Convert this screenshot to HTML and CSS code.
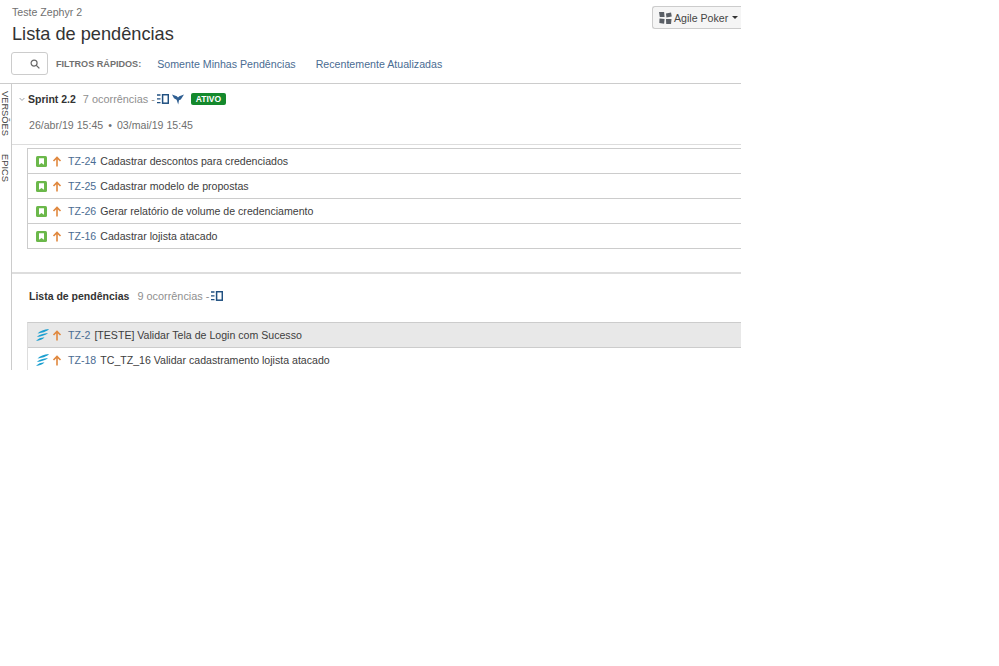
FILE: index.html
```html
<!DOCTYPE html>
<html lang="pt">
<head>
<meta charset="utf-8">
<title>Lista de pendências</title>
<link rel="stylesheet" href="styles.css">
</head>
<body>
<svg class="defs" width="0" height="0" aria-hidden="true">
  <symbol id="story" viewBox="0 0 11 11"><rect width="11" height="11" rx="1.5" fill="#6bb84a"/><path d="M3 2.2h5v6.6L5.5 6.9 3 8.8z" fill="#fff"/></symbol>
  <symbol id="up" viewBox="0 0 10 11"><path d="M5 10.5V1.5M1.5 5L5 1.5 8.5 5" fill="none" stroke="#e0883e" stroke-width="1.6"/></symbol>
  <symbol id="test" viewBox="0 0 13 12"><path d="M1.500 4.500C4 1.800 8 .6 13 0 11 2.500 6.500 3.700 1.500 4.500zM.8 8C3.500 5.300 7.500 4.500 12 4 10 6.300 5.500 7.300.8 8zM0 12C2 9.500 5 8.800 8.500 8.300 7 10.500 3.500 11.500 0 12z" fill="#1b9fd0"/></symbol>
  <symbol id="plan" viewBox="0 0 12 10"><path d="M0 1h3.500M0 4.800h3.500M0 8.600h3.500" stroke="#205081" stroke-width="1.300"/><rect x="5.600" y=".7" width="5.700" height="8.500" fill="none" stroke="#205081" stroke-width="1.500"/></symbol>
</svg>
<div class="board">
  <header class="top">
    <div class="headings">
      <div class="project">Teste Zephyr 2</div>
      <h1 class="title">Lista de pendências</h1>
    </div>
    <button class="poker">
      <svg class="poker-icon" viewBox="0 0 14 13" aria-hidden="true"><path d="M0 0h5.500l.5 5.500H.8zM7.500 1.500l5.500-1 .8 4.500-5.800 1zM.5 7l5.500.5-.5 5.200-5.200-.7zM7.500 7.500h6l-.5 5.500H7.800z" fill="#5a5f66"/></svg>
      <span class="poker-text">Agile Poker</span>
      <span class="caret"></span>
    </button>
  </header>
  <div class="filters">
    <div class="search">
      <svg class="search-icon" viewBox="0 0 11 11" aria-hidden="true"><circle cx="4.500" cy="4.500" r="3.300" fill="none" stroke="#666" stroke-width="1.300"/><path d="M7 7l3.300 3.300" stroke="#666" stroke-width="1.500"/></svg>
    </div>
    <span class="filters-label">FILTROS RÁPIDOS:</span>
    <a class="filter-link">Somente Minhas Pendências</a>
    <a class="filter-link">Recentemente Atualizadas</a>
  </div>
  <div class="body">
    <aside class="rail">
      <span class="rail-label">VERSÕES</span>
      <span class="rail-label">EPICS</span>
    </aside>
    <main class="content">
      <section class="sprint">
        <div class="sprint-head">
          <svg class="chev" viewBox="0 0 7 5" aria-hidden="true"><path d="M.7.8L3.500 3.600 6.300.8" fill="none" stroke="#8a8f96" stroke-width="1"/></svg>
          <strong class="name">Sprint 2.2</strong>
          <span class="count">7 ocorrências -</span>
          <svg class="plan" aria-hidden="true"><use href="#plan"/></svg>
          <svg class="fly" viewBox="0 0 12 11" aria-hidden="true"><path d="M0 .5l4.800 1.800L6 3.500 7.300 2.200 12 .5 8.800 5.500 7 6.300 6.200 10.500 4.600 5.700 2 4.300z" fill="#2f5f92"/></svg>
          <span class="badge">ATIVO</span>
        </div>
        <div class="dates">26/abr/19 15:45<span class="dot">•</span>03/mai/19 15:45</div>
        <div class="list">
          <div class="row"><svg class="type" aria-hidden="true"><use href="#story"/></svg><svg class="prio" aria-hidden="true"><use href="#up"/></svg><a class="key">TZ-24</a><span class="sum">Cadastrar descontos para credenciados</span></div>
          <div class="row"><svg class="type" aria-hidden="true"><use href="#story"/></svg><svg class="prio" aria-hidden="true"><use href="#up"/></svg><a class="key">TZ-25</a><span class="sum">Cadastrar modelo de propostas</span></div>
          <div class="row"><svg class="type" aria-hidden="true"><use href="#story"/></svg><svg class="prio" aria-hidden="true"><use href="#up"/></svg><a class="key">TZ-26</a><span class="sum">Gerar relatório de volume de credenciamento</span></div>
          <div class="row"><svg class="type" aria-hidden="true"><use href="#story"/></svg><svg class="prio" aria-hidden="true"><use href="#up"/></svg><a class="key">TZ-16</a><span class="sum">Cadastrar lojista atacado</span></div>
        </div>
      </section>
      <section class="backlog">
        <div class="backlog-head">
          <strong class="name">Lista de pendências</strong>
          <span class="count">9 ocorrências -</span>
          <svg class="plan" aria-hidden="true"><use href="#plan"/></svg>
        </div>
        <div class="list">
          <div class="row selected"><svg class="type wide" aria-hidden="true"><use href="#test"/></svg><svg class="prio" aria-hidden="true"><use href="#up"/></svg><a class="key">TZ-2</a><span class="sum">[TESTE] Validar Tela de Login com Sucesso</span></div>
          <div class="row"><svg class="type wide" aria-hidden="true"><use href="#test"/></svg><svg class="prio" aria-hidden="true"><use href="#up"/></svg><a class="key">TZ-18</a><span class="sum">TC_TZ_16 Validar cadastramento lojista atacado</span></div>
        </div>
      </section>
    </main>
  </div>
</div>
</body>
</html>
```

FILE: styles.css
```css
* { box-sizing: border-box; }
html, body { margin: 0; background: #fff; }
body { font-family: "Liberation Sans", Arial, sans-serif; color: #333; }
.defs { position: absolute; }
.board { width: 741px; height: 370px; overflow: hidden; display: flex; flex-direction: column; }
.top { display: flex; justify-content: space-between; align-items: flex-start; height: 47px; padding: 6px 0 0 12px; }
.project { font-size: 10.6px; line-height: 13px; color: #707070; }
.title { margin: 4px 0 0; font-size: 18.2px; line-height: 22px; font-weight: 400; color: #333; }
.poker { width: 89px; height: 23px; margin: 0; padding: 0 0 0 6px; display: flex; align-items: center; background: #f5f5f5; border: 1px solid #ccc; border-right: 0; border-radius: 3px 0 0 3px; font: 10.6px "Liberation Sans", Arial, sans-serif; color: #444; white-space: nowrap; }
.poker-icon { width: 13px; height: 12px; margin-right: 2px; }
.caret { width: 0; height: 0; margin-left: 4px; border: 3px solid transparent; border-top: 3px solid #333; border-bottom: 0; }
.filters { display: flex; align-items: center; height: 37px; padding: 5px 0 8px 11px; border-bottom: 1px solid #ccc; }
.search { width: 37px; height: 23px; margin-right: 8px; display: flex; align-items: center; justify-content: flex-end; padding-right: 7px; border: 1px solid #ccc; border-radius: 3px; }
.search-icon { width: 10px; height: 10px; }
.filters-label { font-size: 9.1px; font-weight: 700; color: #707070; margin-right: 16px; }
.filter-link { font-size: 10.65px; color: #4a6c92; margin-right: 20px; }
.body { flex: 1; display: flex; min-height: 0; }
.rail { width: 12px; flex: none; border-right: 1px solid #ccc; display: flex; flex-direction: column; align-items: center; gap: 18px; padding: 7px 2px 0 0; }
.rail-label { writing-mode: vertical-rl; font-size: 9.3px; line-height: 10px; color: #444; }
.content { flex: 1; min-width: 0; }
.sprint { height: 190px; padding-top: 8px; border-bottom: 2px solid #ddd; }
.sprint-head { display: flex; align-items: center; height: 14px; padding-left: 7px; }
.chev { width: 6px; height: 5px; margin-right: 3px; }
.name { font-size: 10.5px; font-weight: 700; color: #333; margin-right: 7px; }
.count { font-size: 10.9px; color: #8f8f8f; margin-right: 2px; }
.plan { width: 12px; height: 10px; margin-right: 3px; }
.fly { width: 12px; height: 11px; margin-right: 7px; }
.badge { width: 35px; height: 12px; line-height: 12px; text-align: center; background: #14892c; color: #fff; border-radius: 2px; font-size: 8.5px; font-weight: 700; }
.dates { height: 30px; margin-top: 9px; padding: 0 0 0 17px; font-size: 10.6px; line-height: 20px; color: #707070; border-bottom: 1px solid #ddd; }
.dot { margin: 0 5px; }
.list { margin: 3px 0 0 15px; border-top: 1px solid #ccc; border-left: 1px solid #ccc; }
.row { display: flex; align-items: center; height: 25px; padding-left: 8px; border-bottom: 1px solid #ccc; font-size: 10.6px; }
.selected { background: #e8e8e8; }
.type { width: 11px; height: 11px; margin-right: 5px; flex: none; }
.wide { width: 13px; height: 12px; margin-right: 3px; }
.prio { width: 10px; height: 11px; margin-right: 6px; flex: none; }
.key { color: #4a6c92; margin-right: 4px; }
.sum { color: #3d3d3d; }
.backlog { padding-top: 15px; }
.backlog-head { display: flex; align-items: center; height: 14px; padding-left: 17px; }
.backlog-head .name { margin-right: 8px; }
.backlog .list { margin-top: 19px; border-left: 1px solid #ddd; }
```
